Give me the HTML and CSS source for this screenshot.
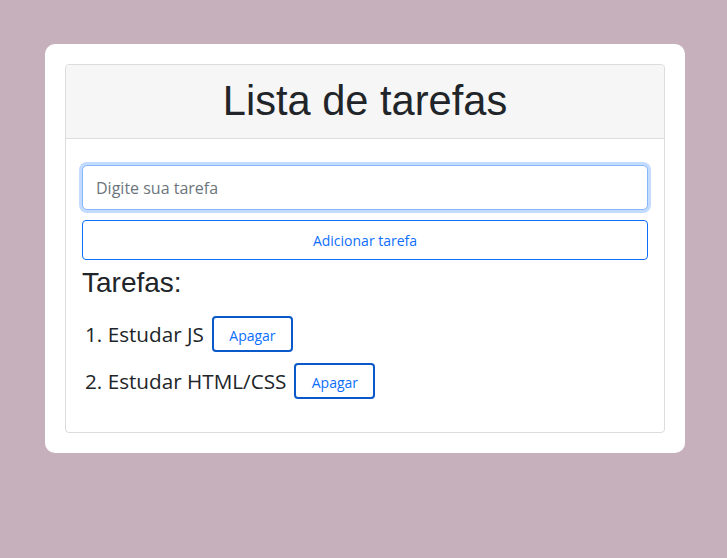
FILE: index.html
```html
<!DOCTYPE html>
<html lang="pt-BR">
<head>
<meta charset="utf-8">
<title>Lista de tarefas</title>
<link rel="stylesheet" href="styles.css">
</head>
<body>
<main class="container">
  <section class="card">
    <header class="card-header">
      <h1 class="title">Lista de tarefas</h1>
    </header>
    <div class="card-body">
      <input class="task-input is-focused" type="text" placeholder="Digite sua tarefa" autofocus>
      <button class="btn btn-add" type="button">Adicionar tarefa</button>
      <h3 class="list-title">Tarefas:</h3>
      <ol class="task-list">
        <li class="task"><span class="task-text">Estudar JS</span><button class="btn btn-del" type="button">Apagar</button></li>
        <li class="task"><span class="task-text">Estudar HTML/CSS</span><button class="btn btn-del" type="button">Apagar</button></li>
      </ol>
    </div>
  </section>
</main>
</body>
</html>
```
FILE: styles.css
```css
* { box-sizing: border-box; }
html, body { margin: 0; padding: 0; }
body {
  background: #c5b0bb;
  font-family: "Open Sans", "Noto Sans", sans-serif;
  color: #212529;
  padding: 44px 42px 0 45px;
}
.container {
  width: 640px;
  background: #fff;
  border-radius: 10px;
  padding: 20px;
}
.card {
  border: 1px solid #dcdcdc;
  border-radius: 4px;
  background: #fff;
}
.card-header {
  background: #f6f6f6;
  border-bottom: 1px solid #dcdcdc;
  border-radius: 4px 4px 0 0;
  padding: 10px 16px 12px;
}
.title {
  margin: 0;
  font-family: "Liberation Sans", Arial, sans-serif;
  font-weight: 400;
  font-size: 41.6px;
  line-height: 51px;
  text-align: center;
  color: #212529;
}
.card-body {
  padding: 26px 16px 33px;
  display: flex;
  flex-direction: column;
}
.task-input {
  display: block;
  width: 100%;
  height: 45px;
  border: 1px solid #86b7fe;
  border-radius: 5px;
  padding: 0 13px;
  font-family: "Open Sans", sans-serif;
  font-size: 16px;
  color: #212529;
  outline: none;
  box-shadow: 0 0 0 3px rgba(13, 110, 253, 0.25);
}
.task-input::placeholder { color: #6c757d; }
.btn {
  font-family: "Open Sans", sans-serif;
  font-size: 14px;
  color: #0d6efd;
  background: #fff;
  cursor: pointer;
}
.btn-add {
  margin-top: 10px;
  width: 100%;
  height: 40px;
  border: 1px solid #0d6efd;
  border-radius: 4px;
  padding: 0;
}
.list-title {
  margin: 6px 0 0 0;
  font-family: "Liberation Sans", Arial, sans-serif;
  font-weight: 400;
  font-size: 28px;
  line-height: 34px;
}
.task-list {
  margin: 16px 0 0;
  padding: 0 0 0 3px;
  list-style-position: inside;
  display: flex;
  flex-direction: column;
  gap: 11px;
}
.task {
  font-size: 20.7px;
  line-height: 36px;
  color: #212529;
}
.task-text { margin-right: 8px; }
.btn-del {
  width: 81px;
  height: 36px;
  border: 2px solid #0a58ca;
  border-radius: 4px;
  padding: 2px 0 0;
  vertical-align: top;
  margin-top: 0;
  line-height: 32px;
}
```
